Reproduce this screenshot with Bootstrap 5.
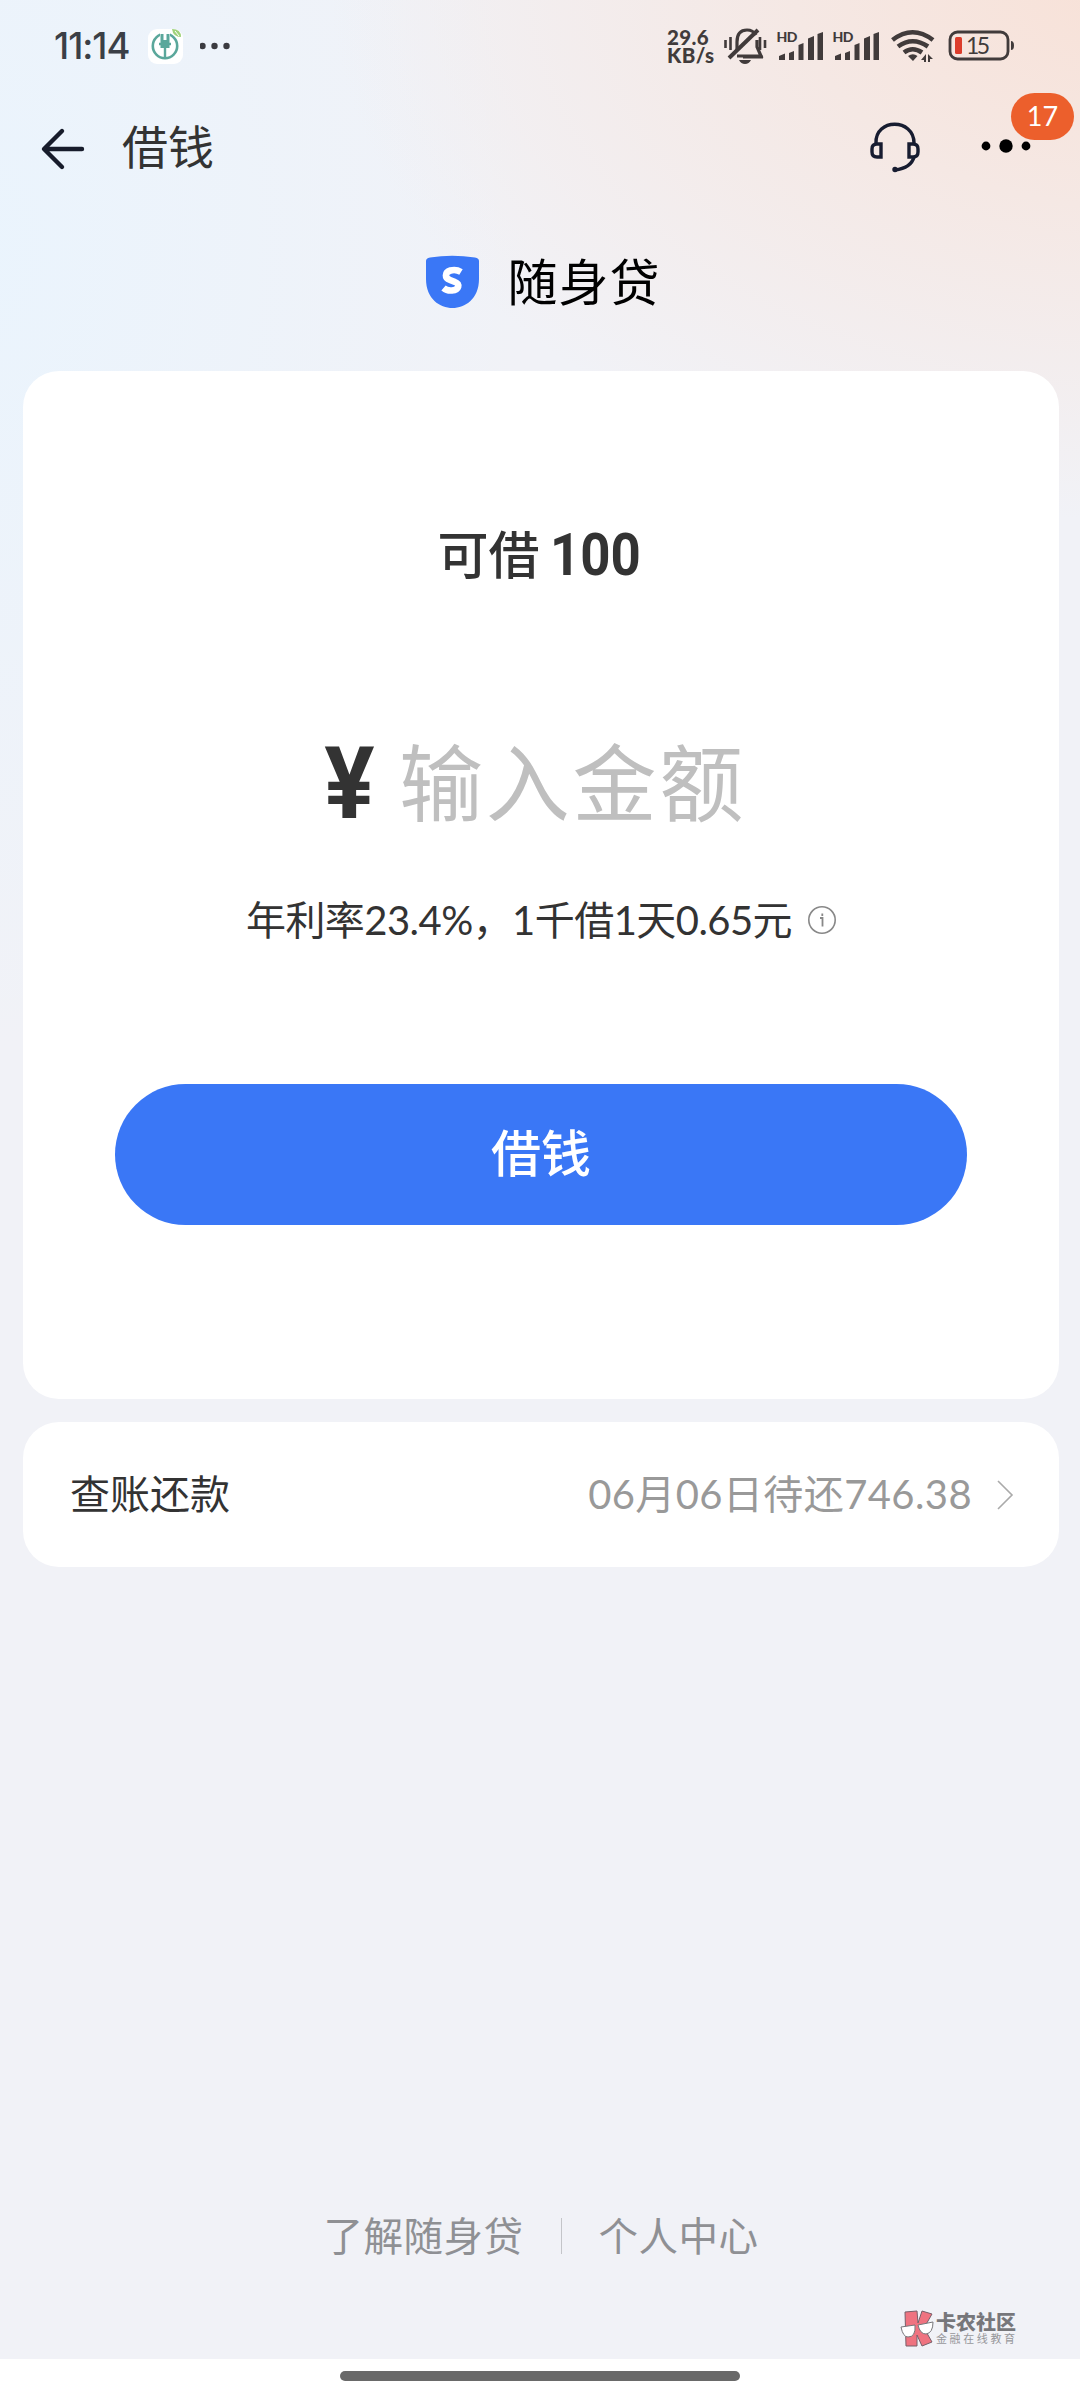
<!DOCTYPE html>
<html lang="zh-CN">
<head>
<meta charset="utf-8">
<meta name="viewport" content="width=device-width, initial-scale=1">
<title>随身贷</title>
<link href="https://cdn.jsdelivr.net/npm/bootstrap@5.3.0/dist/css/bootstrap.min.css" rel="stylesheet">
<style>
body{width:1080px;height:2400px;overflow:hidden;color:#333;font-family:Lato,"Noto Sans CJK SC",sans-serif;
background:radial-gradient(ellipse 800px 540px at 1130px -20px,#f8e1d7 0,#f5e8e4 42%,rgba(242,239,243,0) 100%),radial-gradient(ellipse 560px 800px at -30px 250px,#eaf4fd 0,rgba(241,242,247,0) 100%),#f1f2f7}
svg{display:block;flex:none}
.statusbar{height:92px;padding-left:54px}
.clock{font:500 36.500px/1 Inter,sans-serif;letter-spacing:-1px;width:94px;color:#3b3f46}
.speed{font:900 20.500px/18px Lato,sans-serif;letter-spacing:.4px;color:#413b3b;width:57px}
.topnav{height:109px}
.nav-title{font-size:46px;line-height:1;width:747px;margin-left:-1px}
.count-pill{position:absolute;left:1011px;top:93px;width:63px;height:47px;background:#ec5f2c;color:#fff;font-size:27px}
.brand-row{height:170px;padding-bottom:8px;padding-left:5px}
.brand-name{font-size:50px;line-height:1;letter-spacing:1px;color:#000}
.brand-mark{margin-right:23px}
.panel{background:#fff;border-radius:36px;margin:0 21px 0 23px}
.loan-panel{height:1028px}
.quota{margin-top:153px;height:62px;font-size:51px;font-weight:500}
.quota-num{font:700 60px/62px Roboto,sans-serif;display:inline-block;transform:scaleX(.88);transform-origin:left;width:95px;margin-left:10px}
.amount{height:100px;margin-top:147px}
.yen{font:700 101px/104px Roboto,sans-serif;display:inline-block;transform:scaleX(.93);width:62px;margin-right:15px;padding-top:2px}
.hint{font-size:84px;letter-spacing:2.7px;color:#bfbfbf;margin-right:14px}
.rate{height:60px;margin-top:57px;font-size:40px;letter-spacing:-.55px}
.btn-loan{--bs-btn-bg:#3a77f6;--bs-btn-color:#fff;--bs-btn-border-width:0;width:852px;height:141px;margin-top:134px;padding-bottom:9px;font-size:50px;font-weight:500}
.bill-panel{height:145px;margin-top:23px;padding:0 44px 2px 47px;font-size:40px}
.due{color:#999;letter-spacing:.4px;margin-right:-1px}
.foot-links{height:60px;font-size:39.500px;letter-spacing:.5px;color:#8f9094;margin-top:639px;padding-left:2px}
.vline{width:1px;height:36px;background:#c4c5c9;margin:0 37px}
.stamp{height:60px;margin-top:33px;padding-left:900px}
.stamp-a{font-size:20px;line-height:20px;font-weight:900;color:#77777b;white-space:nowrap}
.stamp-b{font-size:11px;line-height:14px;letter-spacing:2.6px;color:#97979b;white-space:nowrap}
.gesture{height:43px;background:#fff;padding-top:12px}
.gesture-bar{width:400px;height:10px;background:#696969}
</style>
</head>
<body class="d-flex flex-column position-relative">
<header>
<div class="statusbar d-flex align-items-center">
<span class="clock">11:14</span>
<svg width="36" height="36" viewBox="0 0 36 36"><rect width="35" height="35" y="1" rx="9" fill="#fff"/><circle cx="17" cy="18" r="12.200" fill="none" stroke="#5aa79b" stroke-width="2.600"/><path d="M12 3h10v9h-10z" fill="#fff"/><path d="M13.500 6v13h7V6" fill="#5aa79b" stroke="#5aa79b" stroke-width="2"/><path d="M17 3v9" stroke="#fff" stroke-width="3"/><path d="M17 12v17M11 16h12" fill="none" stroke="#5aa79b" stroke-width="2.400"/><path d="M24 1q9 0 9 8q-8 0-9-8z" fill="#9fd27a"/><path d="M27 3l4 5" stroke="#fff"/></svg>
<svg class="ms-3" width="34" height="10"><g fill="#3b3b40"><circle cx="2.500" cy="5" r="3.200"/><circle cx="14.500" cy="5" r="3.200"/><circle cx="26.500" cy="5" r="3.200"/></g></svg>
<div class="speed ms-auto">29.6<br>KB/s</div>
<svg width="356" height="50" viewBox="724 21 356 50" role="img">
<g fill="none" stroke="#413b3b" stroke-width="3.200">
<path d="M737 50V42q0-12 10-12 6 0 9 5M757 40v7l4 9H737M763 57H743"/><path d="M729 58L758 30" stroke-width="4"/>
<path d="M725.500 40v8M730.500 37v13M760 37v13M765 40v8" stroke-width="2.600"/></g>
<path d="M739 60h12q-2 4-6 4t-6-4z" fill="#413b3b"/>
<g id="cell" fill="#413b3b"><text x="776.500" y="42" font-family="Lato,sans-serif" font-size="14" font-weight="900" textLength="21">HD</text><path d="M779 56l6-2.500V60h-6zM789 53l5-2v9h-5zM798.500 45l5-2v17h-5zM808 38.500l6-2.500v24h-6zM817.500 34l5.500-2v28h-5.500z"/></g>
<use href="#cell" x="56"/>
<g fill="none" stroke="#413b3b" stroke-width="4.600"><path d="M892.500 40Q912.500 24.500 933 40M898 46.500Q912.500 36 928 46.500M904 52.500Q912.500 46 922 52.500"/></g>
<path d="M908 56q5-3.500 9.500 0L913 61zM921 60l5-6v8h-2v-2zM928 62v-8l5 5h-3v3z" fill="#413b3b"/>
<rect x="950" y="32" width="58" height="27" rx="7.500" fill="none" stroke="#413b3b" stroke-width="2.800"/><rect x="955" y="37" width="7" height="17" rx="1.500" fill="#dc3d2c"/><path d="M1011 41q3 0 3 4.500t-3 4.500z" fill="#413b3b"/>
<text x="966" y="54" font-family="Lato,sans-serif" font-size="23" fill="#413b3b" textLength="24">15</text>
</svg>
</div>
<nav class="topnav d-flex align-items-center">
<svg width="123" height="50" viewBox="0 0 123 50"><path d="M62 9L44 27 62 45M45 27H82" fill="none" stroke="#171c2b" stroke-width="4.400" stroke-linecap="round" stroke-linejoin="round"/></svg>
<span class="nav-title">借钱</span>
<svg width="211" height="56" viewBox="869 119 211 56"><g fill="none" stroke="#171c30" stroke-width="3.400"><path d="M876 143C875 118 914 118 914 143M914 157Q911 168 895 170"/><path d="M881 144h-4q-5 0-5 5v3q0 5 5 5h4zM909 144h4q5 0 5 5v3q0 5-5 5h-4z"/></g><circle cx="895" cy="169.500" r="2.700" fill="#171c30"/><circle cx="986" cy="146" r="4.400"/><circle cx="1006" cy="146" r="6.700"/><circle cx="1026" cy="146" r="4.400"/></svg>
</nav>
<span class="count-pill rounded-pill d-flex align-items-center justify-content-center">17</span>
<div class="brand-row d-flex align-items-center justify-content-center">
<svg class="brand-mark" width="60" height="54" viewBox="0 0 60 54"><path d="M1 6Q1 3 5 2.500 27-1 50 2.500 54 3 54 6V24C54 44 40 53 27.500 53S1 44 1 24z" fill="#3a77f6"/><path d="M36 17Q31 14 25.500 15.500C19.500 17.500 19.500 23 25 25L30 27C35.500 29 34 35 27 35.500Q22 36 18.500 33" fill="none" stroke="#fff" stroke-width="6.600"/></svg>
<span class="brand-name">随身贷</span>
</div>
</header>
<main>
<section class="panel loan-panel d-flex flex-column align-items-center">
<div class="quota d-flex align-items-center"><span>可借</span><span class="quota-num">100</span></div>
<div class="amount d-flex align-items-center"><span class="yen">¥</span><span class="hint">输入金额</span></div>
<div class="rate d-flex align-items-center"><span>年利率23.4%，1千借1天0.65元</span>
<svg class="ms-3" width="28" height="28" viewBox="0 0 28 28"><circle cx="14" cy="14" r="13.200" fill="none" stroke="#888" stroke-width="1.600"/><path d="M12 12h2.500v8.500M14.300 7.500v2.500" fill="none" stroke="#888" stroke-width="1.800"/></svg></div>
<button class="btn btn-loan rounded-pill">借钱</button>
</section>
<section class="panel bill-panel d-flex align-items-center">
<span>查账还款</span><span class="due ms-auto">06月06日待还746.38</span>
<svg class="ms-4" width="20" height="32" viewBox="0 0 20 32"><path d="M3 3L17 17 3 31" fill="none" stroke="#aaa" stroke-width="1.600"/></svg>
</section>
</main>
<footer>
<div class="foot-links d-flex align-items-center justify-content-center"><span>了解随身贷</span><span class="vline"></span><span>个人中心</span></div>
<div class="stamp d-flex align-items-center">
<svg width="36" height="38" viewBox="0 0 36 38"><path d="M5 2l12-1 1 12 4-12 10 3-8 14 8 14-10 4-5-11v11H6z" fill="#ef7380" stroke="#77606a"/><path d="M1 17l14-2q1 12-7 12-5 0-7-10zM18 15l15-3q0 11-7 12-6 0-8-9z" fill="#fff" stroke="#77777b"/></svg>
<div><div class="stamp-a">卡农社区</div><div class="stamp-b">金融在线教育</div></div>
</div>
<div class="gesture d-flex justify-content-center"><div class="gesture-bar rounded-pill"></div></div>
</footer>
<script src="https://cdn.jsdelivr.net/npm/bootstrap@5.3.0/dist/js/bootstrap.bundle.min.js"></script>
</body>
</html>
